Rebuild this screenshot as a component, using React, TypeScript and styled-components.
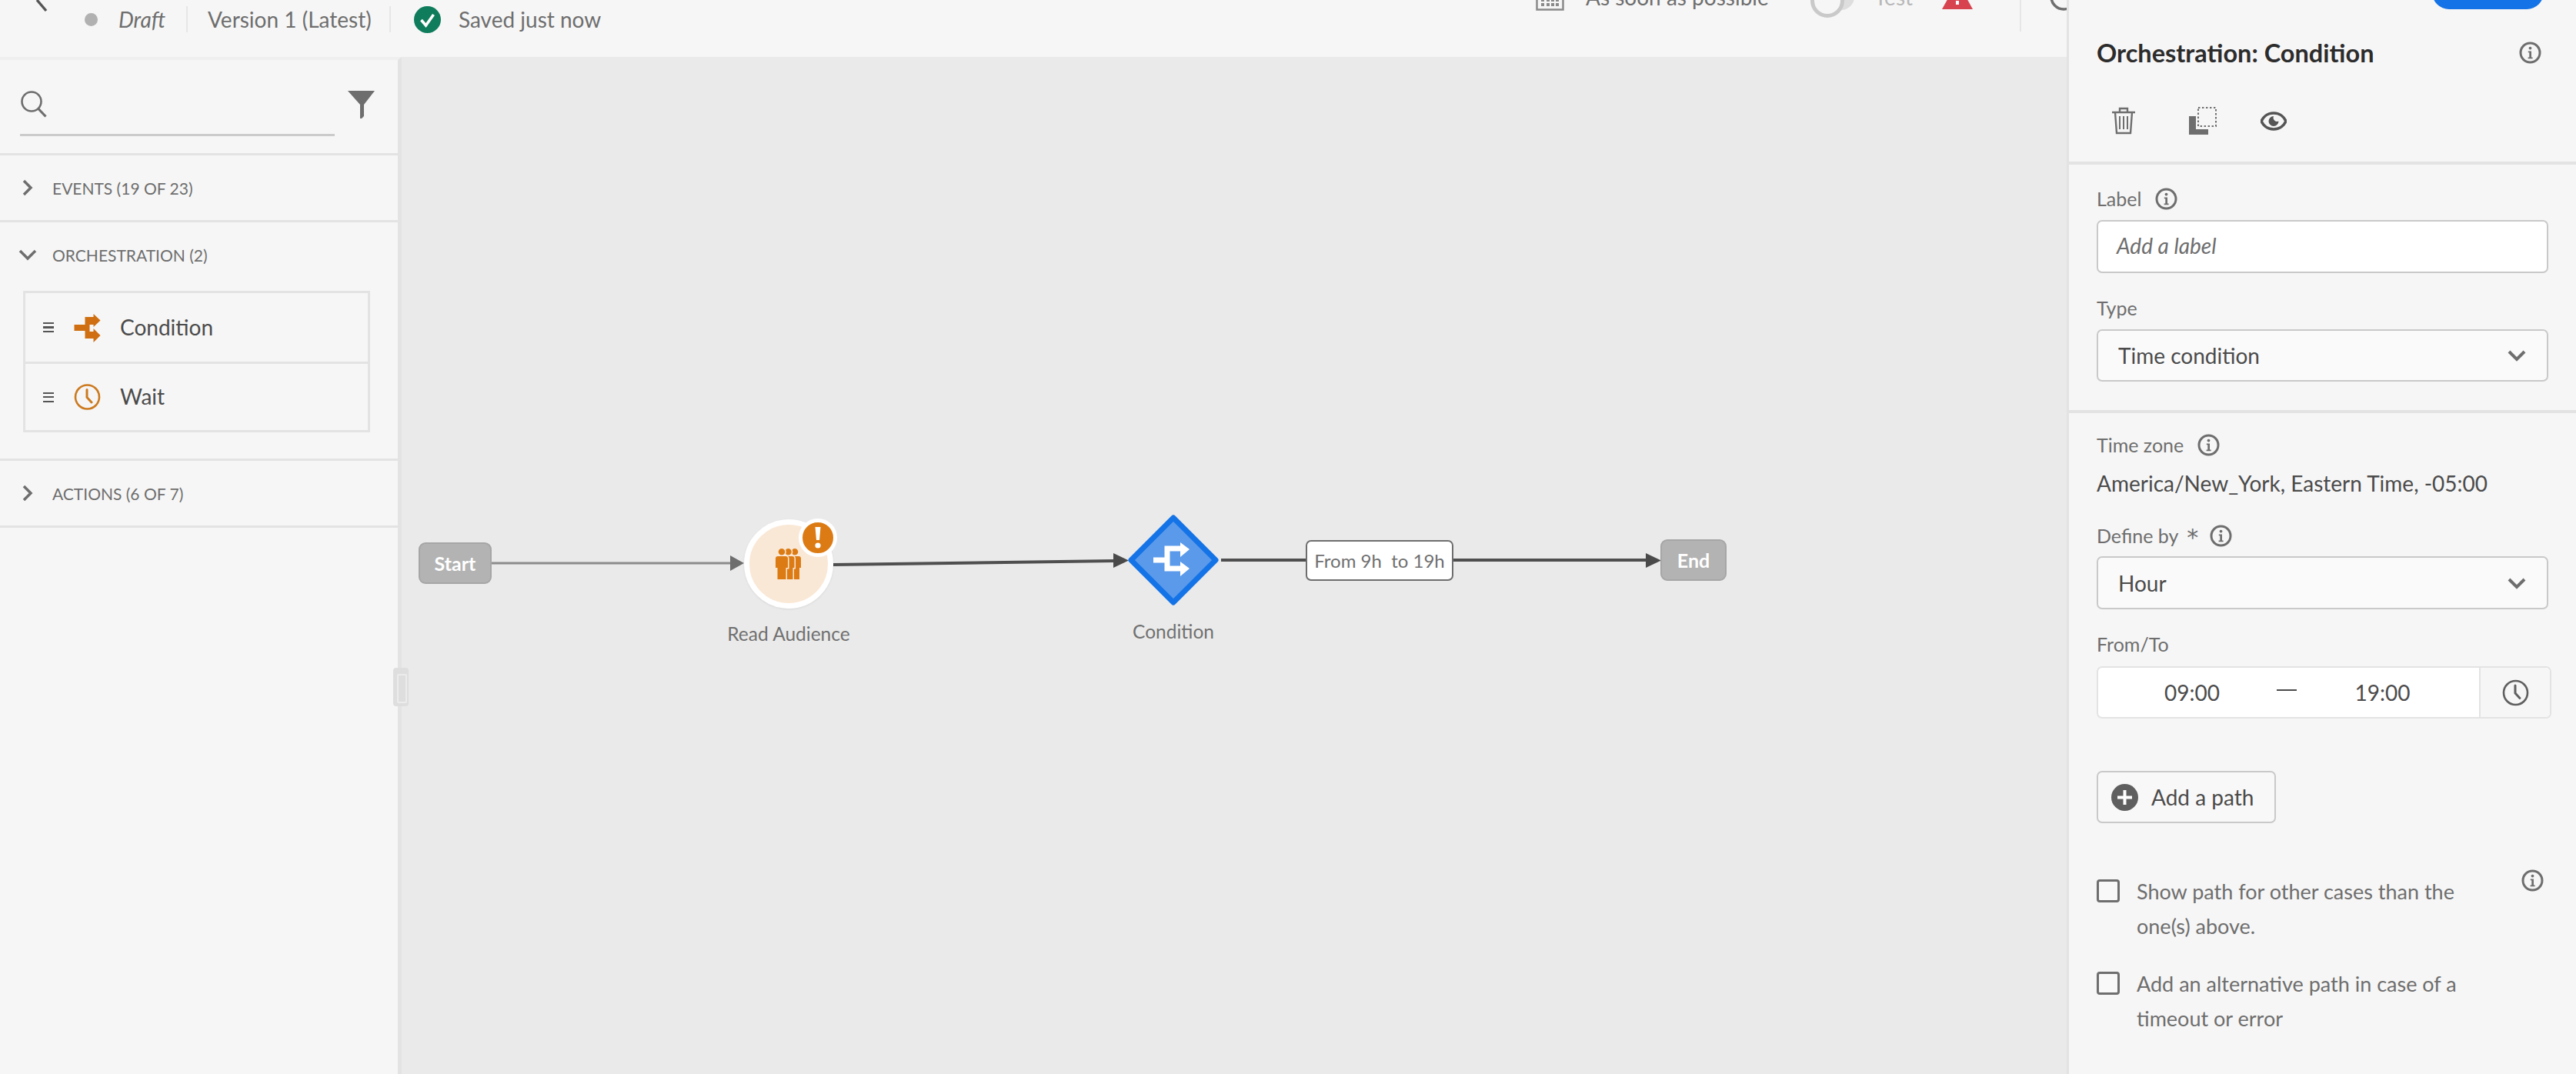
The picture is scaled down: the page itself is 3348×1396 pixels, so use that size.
import React from "react";
import styled, { createGlobalStyle } from "styled-components";

const Global = createGlobalStyle`
  html, body { margin: 0; padding: 0; background: #f5f5f5; overflow: hidden; }
  * { box-sizing: border-box; }
  body { font-family: Lato, "Open Sans", sans-serif; color: #6e6e6e; }
`;

const Page = styled.div`
  width: 3348px; height: 1396px; display: flex; overflow: hidden; background: #f5f5f5;
`;
const Main = styled.div`
  width: 2686px; flex: none; display: flex; flex-direction: column; overflow: hidden;
`;
const TopBar = styled.header`
  height: 74px; flex: none; display: flex; align-items: flex-start; justify-content: space-between; background: #f6f6f6;
`;
const TopLeft = styled.div`
  height: 50px; display: flex; align-items: center; padding-left: 40px;
`;
const TopRight = styled.div`
  height: 40px; margin-top: -24px; display: flex; align-items: center; width: 690px; flex: none;
`;
const BackIcon = styled.svg`
  width: 24px; height: 24px; margin-top: -42px; flex: none;
`;
const DraftDot = styled.span`
  width: 17px; height: 17px; border-radius: 50%; background: #b1b1b1; margin: 0 27px 0 46px; flex: none;
`;
const DraftText = styled.span`
  font-size: 28px; font-style: italic; color: #6e6e6e; width: 88px; flex: none;
`;
const TopSep = styled.span`
  width: 2px; height: 34px; background: #e6e6e6; flex: none;
`;
const TopText = styled.span<{ $w: number; $ml?: number }>`
  font-size: 28px; color: #6e6e6e; width: ${(p) => p.$w}px; margin-left: ${(p) => p.$ml ?? 0}px; flex: none; white-space: nowrap;
`;
const CheckIcon = styled.svg`
  width: 35px; height: 35px; margin: 0 23px 0 30px; flex: none;
`;
const Calendar = styled.svg`
  width: 37px; height: 36px; flex: none; margin-right: 28px;
`;
const Toggle = styled.span`
  width: 57px; height: 34px; border-radius: 17px; background: #dedede; position: relative; flex: none;
  &::before {
    content: ""; position: absolute; left: 0; top: 0; width: 34px; height: 34px; border-radius: 50%;
    background: #f6f6f6; border: 5px solid #c9c9c9;
  }
`;
const TestText = styled.span`
  font-size: 28px; color: #b8b8b8; margin-left: 26px; width: 88px; flex: none;
`;
const Triangle = styled.svg`
  width: 40px; height: 36px; flex: none; margin-top: -4px;
`;
const RightSep = styled.span`
  width: 2px; height: 60px; background: #e6e6e6; margin: 30px 37px 0 61px; flex: none;
`;
const RingIcon = styled.svg`
  width: 36px; height: 36px; flex: none;
`;

const Body = styled.div`
  flex: 1; display: flex; min-height: 0;
`;
const LeftPanel = styled.aside`
  width: 522px; flex: none; background: #f6f6f6; border-right: 5px solid #e3e3e3; border-top: 4px solid #efefef;
  display: flex; flex-direction: column;
`;
const SearchRow = styled.div`
  height: 124px; flex: none; border-bottom: 3px solid #e3e3e3; display: flex; padding: 39px 30px 0 26px;
  align-items: flex-start; justify-content: space-between;
`;
const SearchField = styled.div`
  width: 409px; height: 60px; border-bottom: 3px solid #cbcbcb; flex: none;
`;
const SearchIcon = styled.svg`
  width: 36px; height: 36px; display: block;
`;
const FilterIcon = styled.svg`
  width: 35px; height: 37px; flex: none;
`;
const Section = styled.section`
  border-bottom: 3px solid #e3e3e3; flex: none;
`;
const SectionHead = styled.div`
  height: 84px; display: flex; align-items: center; padding-left: 27px;
  font-size: 21px; color: #6e6e6e;
`;
const Chevron = styled.svg`
  width: 18px; height: 24px; margin-right: 23px; flex: none;
`;
const PaletteList = styled.div`
  margin: 5px 36px 34px 30px; border: 3px solid #e3e3e3;
`;
const PaletteRow = styled.div`
  height: 89px; display: flex; align-items: center; padding: 0 0 2px 23px; font-size: 28px; color: #4b4b4b;
  & + & { border-top: 3px solid #e3e3e3; }
`;
const Grip = styled.span`
  width: 14px; height: 13px; flex: none; margin: 2px 26px 0 0;
  border-top: 2.5px solid #555; border-bottom: 2.5px solid #555; position: relative;
  &::after { content: ""; position: absolute; left: 0; right: 0; top: 3px; height: 2.5px; background: #555; }
`;
const PaletteIcon = styled.svg`
  width: 35px; height: 38px; flex: none; margin: 2px 25px 0 0;
`;

const Canvas = styled.main`
  flex: 1; background: #eaeaea; position: relative; overflow: visible;
`;
const Edges = styled.svg`
  position: absolute; left: 0; top: 0; width: 2164px; height: 1322px;
`;
const at = (p: { $x: number; $y: number }) => `left:${p.$x - 522}px;top:${p.$y - 74}px;`;
const Terminal = styled.div<{ $x: number; $y: number; $w: number }>`
  position: absolute; ${at}; width: ${(p) => p.$w}px; height: 54px; background: #b3b3b3; border: 2px solid #a6a6a6;
  border-radius: 9px; color: #fff; font-size: 25px; font-weight: 700; display: flex; align-items: center; justify-content: center;
`;
const AudienceNode = styled.div<{ $x: number; $y: number }>`
  position: absolute; ${at}; width: 116px; height: 116px; border-radius: 50%; background: #fae8d6; border: 7px solid #fff;
  display: flex; align-items: center; justify-content: center; box-shadow: 0 1px 3px rgba(0,0,0,.08);
`;
const PeopleIcon = styled.svg`
  width: 33px; height: 40px; margin-left: -2px;
`;
const Badge = styled.div`
  position: absolute; left: 64px; top: -8px; width: 50px; height: 50px; border-radius: 50%; background: #dc7b14; border: 5px solid #fff;
  display: flex; align-items: center; justify-content: center; color: #fff;
`;
const DiamondNode = styled.svg<{ $x: number; $y: number }>`
  position: absolute; ${at}; width: 118px; height: 118px;
`;
const NodeLabel = styled.div<{ $x: number; $y: number; $w: number }>`
  position: absolute; ${at}; width: ${(p) => p.$w}px; text-align: center; font-size: 24.5px; line-height: 30px; color: #707070; white-space: nowrap;
`;
const EdgeLabel = styled.div<{ $x: number; $y: number }>`
  position: absolute; ${at}; width: 192px; height: 53px; background: #fff; border: 2px solid #6e6e6e; border-radius: 7px;
  display: flex; align-items: center; justify-content: center; font-size: 24px; color: #707070; white-space: pre;
`;
const Handle = styled.div`
  position: absolute; left: -11px; top: 794px; width: 20px; height: 50px; background: #dedede; border-radius: 4px;
  &::after { content: ""; position: absolute; left: 5px; top: 8px; width: 9px; height: 34px; border: 2px solid #ececec; border-radius: 2px; }
`;

const RightPanel = styled.aside`
  flex: 1; border-left: 3px solid #e3e3e3; background: #f6f6f6; display: flex; flex-direction: column; min-width: 0;
`;
const PanelHead = styled.div`
  height: 214px; flex: none; border-bottom: 4px solid #e3e3e3; padding: 0 36px; display: flex; flex-direction: column;
`;
const PublishButton = styled.div`
  width: 145px; height: 44px; margin: -32px 6px 0 auto; border-radius: 22px; background: #1473e6; flex: none;
`;
const TitleRow = styled.div`
  height: 40px; margin-top: 36px; display: flex; align-items: center; justify-content: space-between; padding-right: 9px; flex: none;
`;
const Title = styled.h1`
  margin: 0; font-size: 32.5px; font-weight: 700; color: #2c2c2c;
`;
const Tools = styled.div`
  height: 36px; margin-top: 51px; padding-left: 19px; display: flex; align-items: center; flex: none;
`;
const ToolIcon = styled.svg<{ $w: number; $h: number; $ml?: number }>`
  width: ${(p) => p.$w}px; height: ${(p) => p.$h}px; margin-left: ${(p) => p.$ml ?? 0}px; flex: none;
`;
const PanelBlock = styled.div<{ $pad: string; $rule?: boolean }>`
  padding: ${(p) => p.$pad}; flex: none; ${(p) => (p.$rule ? "border-bottom: 4px solid #e3e3e3;" : "")}
`;
const FieldLabel = styled.div<{ $mt?: number }>`
  height: 30px; margin-top: ${(p) => p.$mt ?? 0}px; display: flex; align-items: center; gap: 18px; font-size: 25px; color: #6e6e6e;
  line-height: 26px;
  & > svg { margin-top: 1px; }
`;
const Star = styled.span`
  margin: 0 -3px 0 -7px; color: #6e6e6e; font-family: "DejaVu Sans", sans-serif; font-size: 30px; line-height: 30px; padding-top: 6px;
`;
const InfoIcon = styled.svg`
  width: 29px; height: 29px; flex: none;
`;
const TextBox = styled.div`
  height: 69px; margin-top: 13px; background: #fff; border: 2px solid #c9c9c9; border-radius: 7px;
  display: flex; align-items: center; padding: 0 0 3px 24px; font-size: 28px; font-style: italic; color: #6e6e6e;
`;
const Select = styled.div<{ $h: number; $mt: number }>`
  height: ${(p) => p.$h}px; margin-top: ${(p) => p.$mt}px; background: #fafafa; border: 2px solid #c9c9c9; border-radius: 7px;
  display: flex; align-items: center; justify-content: space-between; padding: 0 27px 0 26px; font-size: 28px; color: #4b4b4b;
`;
const SelectChevron = styled.svg`
  width: 24px; height: 16px; flex: none;
`;
const Value = styled.div`
  height: 30px; margin-top: 20px; display: flex; align-items: center; font-size: 28px; color: #4b4b4b; white-space: nowrap;
`;
const TimeBox = styled.div`
  height: 68px; width: 591px; margin-top: 14px; display: flex; background: #fff; border: 2px solid #e3e3e3; border-radius: 7px;
`;
const TimeFields = styled.div`
  width: 495px; flex: none; display: grid; grid-template-columns: 232px 30px 1fr; align-items: center; font-size: 28px; color: #4b4b4b; text-align: center;
`;
const TimeCell = styled.span<{ $before?: number; $after?: number }>`
  padding: 0 ${(p) => p.$after ?? 0}px 0 ${(p) => p.$before ?? 0}px;
`;
const Dash = styled.span`
  width: 26px; height: 2px; background: #4b4b4b; margin-top: -6px;
`;
const ClockCell = styled.div`
  flex: 1; border-left: 2px solid #e3e3e3; background: #f6f6f6; display: flex; align-items: center; justify-content: center; border-radius: 0 6px 6px 0;
`;
const ClockIcon = styled.svg`
  width: 35px; height: 35px;
`;
const AddButton = styled.div`
  width: 233px; height: 68px; margin-top: 68px; background: #f8f8f8; border: 2px solid #c9c9c9; border-radius: 7px;
  display: flex; align-items: center; padding-left: 17px; gap: 17px; font-size: 28px; color: #4b4b4b;
`;
const PlusIcon = styled.svg`
  width: 35px; height: 35px; flex: none;
`;
const CheckRow = styled.div<{ $mt: number }>`
  margin-top: ${(p) => p.$mt}px; display: flex; align-items: flex-start; position: relative;
  font-size: 27px; line-height: 45px; color: #6e6e6e;
`;
const Box = styled.span`
  width: 30px; height: 30px; margin: 7px 22px 0 0; border: 3px solid #6e6e6e; border-radius: 4px; flex: none; background: #f8f8f8;
`;
const CheckText = styled.div`
  width: 470px;
`;
const CornerInfo = styled.div`
  position: absolute; right: 6px; top: -6px; display: flex;
`;

const Info = () => (
  <InfoIcon viewBox="0 0 29 29">
    <circle cx="14.5" cy="14.5" r="12.5" fill="none" stroke="#6e6e6e" strokeWidth="3" />
    <circle cx="14.5" cy="8.6" r="1.9" fill="#6e6e6e" />
    <path d="M11.8 12.4h4.2v8h1.6v1.8h-6v-1.8h1.7v-6.2h-1.5z" fill="#6e6e6e" />
  </InfoIcon>
);
const Right = () => (
  <Chevron viewBox="0 0 18 24"><path d="M4 3l9 9-9 9" fill="none" stroke="#6e6e6e" strokeWidth="3.5" /></Chevron>
);
const Down = () => (
  <Chevron viewBox="0 0 18 24" overflow="visible"><path d="M-1 7l10 10 10-10" fill="none" stroke="#6e6e6e" strokeWidth="3.5" /></Chevron>
);
const Caret = () => (
  <SelectChevron viewBox="0 0 24 16"><path d="M2 3l10 10L22 3" fill="none" stroke="#6e6e6e" strokeWidth="4" /></SelectChevron>
);
const Clock = ({ color }: { color: string }) => (
  <g fill="none" stroke={color} strokeWidth="2.6" strokeLinecap="round">
    <circle cx="17.5" cy="17.5" r="15.5" />
    <path d="M17 8v10l6 6.5" strokeWidth="3" />
  </g>
);
const Person = ({ dx, front }: { dx: number; front?: boolean }) => (
  <path
    transform={`translate(${dx} 0)`}
    d={
      front
        ? "M8 0a4.300 4.300 0 1 1 0 8.600a4.300 4.300 0 1 1 0-8.600zM3 10h10a3 3 0 0 1 3 3v12h-2.500v15H2.500V25H0V13a3 3 0 0 1 3-3z"
        : "M8 0a4.300 4.300 0 1 1 0 8.600a4.300 4.300 0 1 1 0-8.600zM3 10h10a3 3 0 0 1 3 3v12h-2v15H3V25H0V13a3 3 0 0 1 3-3z"
    }
  />
);

export default function App() {
  return (
    <Page>
      <Global />
      <Main>
        <TopBar>
          <TopLeft>
            <BackIcon viewBox="0 0 24 24"><path d="M8 8l12 14" fill="none" stroke="#555" strokeWidth="3.4" /></BackIcon>
            <DraftDot />
            <DraftText>Draft</DraftText>
            <TopSep />
            <TopText $w={236} $ml={26}>Version 1 (Latest)</TopText>
            <TopSep />
            <CheckIcon viewBox="0 0 35 35">
              <circle cx="17.5" cy="17.5" r="17.5" fill="#0f7c5c" />
              <path d="M9.5 18l6 7 10-14" fill="none" stroke="#fff" strokeWidth="3.6" />
            </CheckIcon>
            <TopText $w={200}>Saved just now</TopText>
          </TopLeft>
          <TopRight>
            <Calendar viewBox="0 0 37 36">
              <path d="M1.5 4h34v30.500h-34z" fill="none" stroke="#8a8a8a" strokeWidth="2.5" />
              <path d="M7 20h4v4H7zM14 20h4v4h-4zM20 20h4v4h-4zM26 20h4v4h-4zM7 26h4v4H7zM14 26h4v4h-4zM20 26h4v4h-4zM26 26h4v4h-4z" fill="#8a8a8a" />
            </Calendar>
            <TopText $w={292}>As soon as possible</TopText>
            <Toggle />
            <TestText>Test</TestText>
            <Triangle viewBox="0 0 40 36">
              <path d="M20 0L40 36H0z" fill="#d7444f" />
              <path d="M18 10h4v12h-4zM18 25h4v5h-4z" fill="#fff" />
            </Triangle>
            <RightSep />
            <RingIcon viewBox="0 0 36 36"><circle cx="18" cy="18" r="16" fill="none" stroke="#6e6e6e" strokeWidth="3.5" /></RingIcon>
          </TopRight>
        </TopBar>
        <Body>
          <LeftPanel>
            <SearchRow>
              <SearchField>
                <SearchIcon viewBox="0 0 36 36">
                  <circle cx="15" cy="15" r="12.500" fill="none" stroke="#6e6e6e" strokeWidth="2.600" />
                  <path d="M23.500 24l10 10.500" fill="none" stroke="#6e6e6e" strokeWidth="3.200" />
                </SearchIcon>
              </SearchField>
              <FilterIcon viewBox="0 0 35 37">
                <path d="M0 1h35L21 19v15l-3 3h-2V19z" fill="#6e6e6e" />
              </FilterIcon>
            </SearchRow>
            <Section>
              <SectionHead><Right />EVENTS (19 OF 23)</SectionHead>
            </Section>
            <Section>
              <SectionHead><Down />ORCHESTRATION (2)</SectionHead>
              <PaletteList>
                <PaletteRow>
                  <Grip />
                  <PaletteIcon viewBox="0 0 34 38">
                    <path d="M0 15H14V5H25V1L34 9.500L25 18V15H20V24H25V20L34 29L25 38V33H14V23H0Z" fill="#cf6f12" />
                  </PaletteIcon>
                  Condition
                </PaletteRow>
                <PaletteRow>
                  <Grip />
                  <PaletteIcon viewBox="0 0 35 35"><Clock color="#cc7a1e" /></PaletteIcon>
                  Wait
                </PaletteRow>
              </PaletteList>
            </Section>
            <Section>
              <SectionHead><Right />ACTIONS (6 OF 7)</SectionHead>
            </Section>
          </LeftPanel>
          <Canvas>
            <Edges viewBox="522 74 2164 1322">
              <path d="M639 732H950" stroke="#8c8c8c" strokeWidth="3" fill="none" />
              <path d="M949 722l18 10-18 10z" fill="#6e6e6e" />
              <path d="M1083 734L1448 729" stroke="#4f4f4f" strokeWidth="4" fill="none" />
              <path d="M1447 719l20 9.500-20 9.500z" fill="#4a4a4a" />
              <path d="M1587 728H2140" stroke="#4f4f4f" strokeWidth="4" fill="none" />
              <path d="M2139 719l20 9.500-20 9.500z" fill="#4a4a4a" />
            </Edges>
            <Terminal $x={544} $y={705} $w={95}>Start</Terminal>
            <AudienceNode $x={967} $y={675}>
              <PeopleIcon viewBox="0 0 33 40">
                <g fill="#dc7b14" stroke="#fae8d6" strokeWidth="3" paintOrder="stroke">
                  <Person dx={17} />
                  <Person dx={8.500} />
                  <Person dx={0} front />
                </g>
              </PeopleIcon>
              <Badge>
                <svg width="8" height="28" viewBox="0 0 8 28">
                  <path d="M0.500 0h7L6 17H2z" fill="#fff" />
                  <circle cx="4" cy="24" r="3.600" fill="#fff" />
                </svg>
              </Badge>
            </AudienceNode>
            <NodeLabel $x={925} $y={809} $w={200}>Read Audience</NodeLabel>
            <DiamondNode $x={1466} $y={669} viewBox="0 0 118 118">
              <path d="M59 4L114 59L59 114L4 59Z" fill="#5b9aea" stroke="#1473e6" strokeWidth="7" strokeLinejoin="round" />
              <path d="M33 59H51M72 44H51V70H72" fill="none" stroke="#fff" strokeWidth="7" />
              <path d="M68 36l12 9-12 10zM68 61l12 9-12 10z" fill="#fff" />
            </DiamondNode>
            <NodeLabel $x={1425} $y={806} $w={200}>Condition</NodeLabel>
            <EdgeLabel $x={1697} $y={702}>From 9h  to 19h</EdgeLabel>
            <Terminal $x={2158} $y={701} $w={86}>End</Terminal>
            <Handle />
          </Canvas>
        </Body>
      </Main>
      <RightPanel>
        <PanelHead>
          <PublishButton />
          <TitleRow>
            <Title>Orchestration: Condition</Title>
            <Info />
          </TitleRow>
          <Tools>
            <ToolIcon $w={32} $h={36} viewBox="0 0 32 36">
              <path d="M1 7h30M11 6V2h10v4M5 7l2 27h18l2-27" fill="none" stroke="#6e6e6e" strokeWidth="2.400" />
              <path d="M11 12v17M16 12v17M21 12v17" stroke="#6e6e6e" strokeWidth="2" />
            </ToolIcon>
            <ToolIcon $w={36} $h={36} $ml={69} viewBox="0 0 36 36">
              <path d="M0 12h9v17h16v7H0z" fill="#6e6e6e" />
              <rect x="12" y="1" width="23" height="24" fill="none" stroke="#6e6e6e" strokeWidth="2" strokeDasharray="2.400 2.600" />
            </ToolIcon>
            <ToolIcon $w={34} $h={25} $ml={57} viewBox="0 0 34 25">
              <path d="M17 2C26 2 31 8 33 12.500C31 17 26 23 17 23C8 23 3 17 1 12.500C3 8 8 2 17 2Z" fill="none" stroke="#555" strokeWidth="3.600" />
              <path d="M17 6a6.500 6.500 0 1 0 6.500 6.500a5 5 0 0 1-6.500-6.500z" fill="#555" />
            </ToolIcon>
          </Tools>
        </PanelHead>
        <PanelBlock $pad="29px 36px 37px 36px" $rule>
          <FieldLabel>Label <Info /></FieldLabel>
          <TextBox>Add a label</TextBox>
          <FieldLabel $mt={30}>Type</FieldLabel>
          <Select $h={68} $mt={13}>Time condition <Caret /></Select>
        </PanelBlock>
        <PanelBlock $pad="26px 36px 0 36px">
          <FieldLabel>Time zone <Info /></FieldLabel>
          <Value>America/New_York, Eastern Time, -05:00</Value>
          <FieldLabel $mt={38}>Define by <Star>*</Star> <Info /></FieldLabel>
          <Select $h={69} $mt={12}>Hour <Caret /></Select>
          <FieldLabel $mt={30}>From/To</FieldLabel>
          <TimeBox>
            <TimeFields>
              <TimeCell $before={12}>09:00</TimeCell>
              <Dash />
              <TimeCell $after={18}>19:00</TimeCell>
            </TimeFields>
            <ClockCell>
              <ClockIcon viewBox="0 0 35 35"><Clock color="#5f5f5f" /></ClockIcon>
            </ClockCell>
          </TimeBox>
          <AddButton>
            <PlusIcon viewBox="0 0 35 35">
              <circle cx="17.500" cy="17.500" r="17.500" fill="#5f5f5f" />
              <path d="M17.500 8v19M8 17.500h19" stroke="#fff" strokeWidth="4" />
            </PlusIcon>
            Add a path
          </AddButton>
          <CheckRow $mt={66}>
            <Box />
            <CheckText>Show path for other cases than the one(s) above.</CheckText>
            <CornerInfo><Info /></CornerInfo>
          </CheckRow>
          <CheckRow $mt={30}>
            <Box />
            <CheckText>Add an alternative path in case of a timeout or error</CheckText>
          </CheckRow>
        </PanelBlock>
      </RightPanel>
    </Page>
  );
}
